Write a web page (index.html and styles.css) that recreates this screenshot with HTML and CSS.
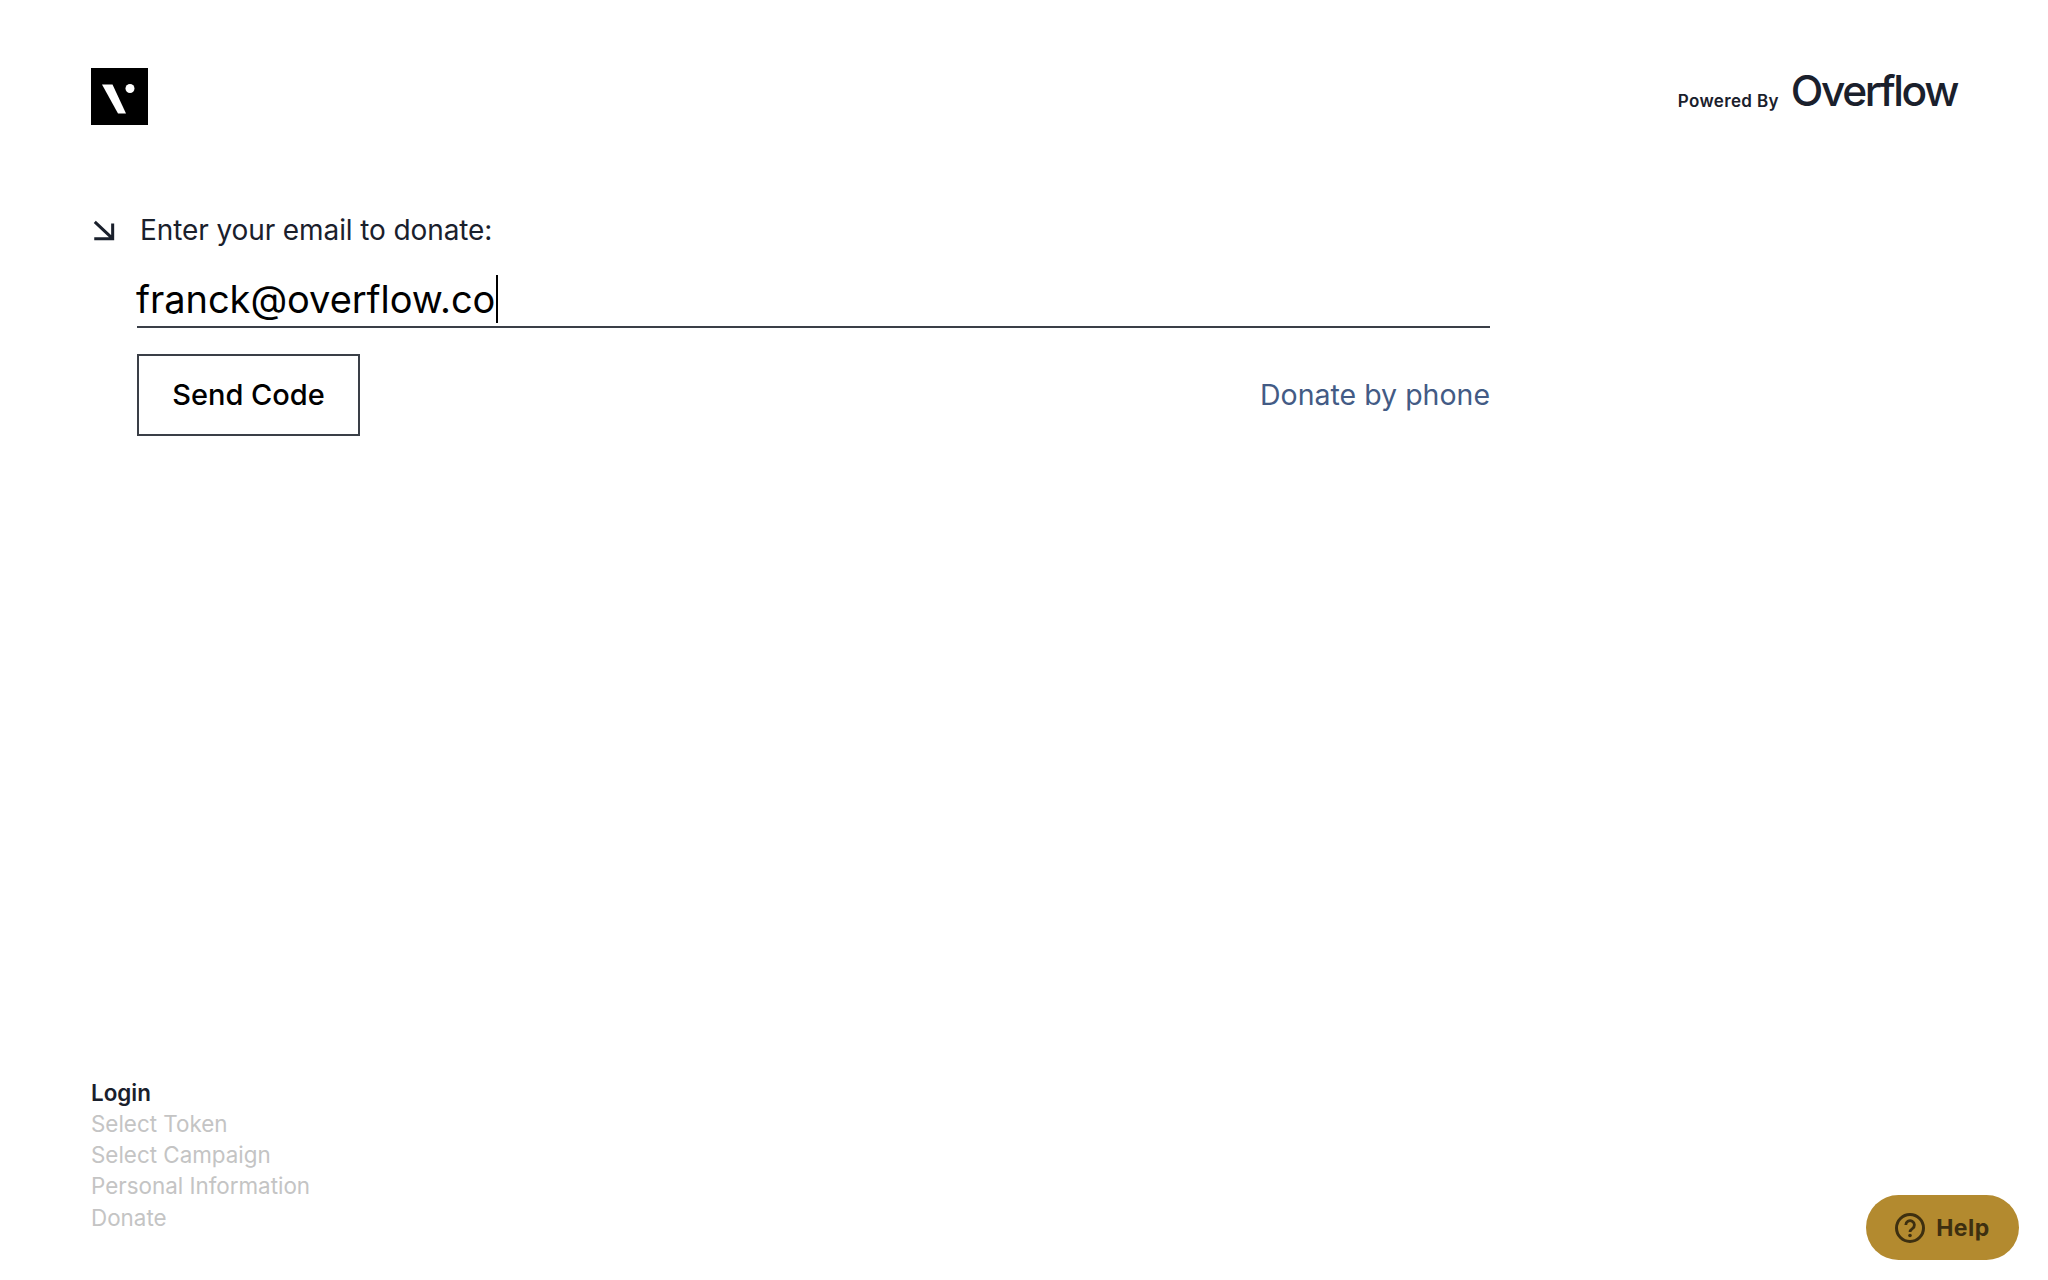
FILE: index.html
```html
<!DOCTYPE html>
<html lang="en">
<head>
    <meta charset="UTF-8">
    <meta name="viewport" content="width=device-width, initial-scale=1.0">
    <link rel="stylesheet" href="styles.css">
    <title>Donate</title>
</head>
<body>

    <div class="page">
        <div class="header">
            <svg class="logo" viewBox="0 0 57 57" aria-label="Logo">
                <rect width="57" height="57" fill="#000"/>
                <path d="M11 16.500H21.500L35 45.500H27Z" fill="#fff"/>
                <circle cx="39" cy="20.500" r="4.500" fill="#fff"/>
            </svg>
            <div class="powered">
                <span class="powered-label">Powered By</span>
                <span class="powered-name">Overflow</span>
            </div>
        </div>

        <form class="email-form">
            <div class="form-label">
                <svg class="arrow" viewBox="0 0 24 24">
                    <path d="M3.500 4.500L19 19M20 6V20H3" fill="none" stroke="#1a202c" stroke-width="2.800"/>
                </svg>
                <label for="email">Enter your email to donate:</label>
            </div>
            <div class="email-field">
                <span id="email" class="email-value">franck@overflow.co</span><span class="caret"></span>
            </div>
            <div class="form-actions">
                <button type="button" class="send-button">Send Code</button>
                <a href="#" class="phone-link">Donate by phone</a>
            </div>
        </form>

        <div class="steps">
            <div class="step active">Login</div>
            <div class="step">Select Token</div>
            <div class="step">Select Campaign</div>
            <div class="step">Personal Information</div>
            <div class="step">Donate</div>
        </div>
    </div>

    <button type="button" class="help-button">
        <svg class="help-icon" viewBox="0 0 30 30">
            <circle cx="15" cy="15" r="13.500" fill="none" stroke="#3d2f10" stroke-width="3"/>
            <path d="M10.800 12a4.300 4.300 0 1 1 6.600 3.600c-1.500 1-2.400 1.700-2.400 3.400" fill="none" stroke="#3d2f10" stroke-width="2.800"/>
            <circle cx="15" cy="22.500" r="1.800" fill="#3d2f10"/>
        </svg>
        Help
    </button>

</body>
</html>
```

FILE: styles.css
```css
body {
    margin: 0;
    font-family: Inter, "Noto Sans", sans-serif;
    background-color: #fff;
    color: #1a202c;
}

.page {
    display: flex;
    flex-direction: column;
    box-sizing: border-box;
    height: 1280px;
    padding: 68px 91px 47px 91px;
}

.header {
    display: flex;
    justify-content: space-between;
    align-items: flex-start;
}

.logo {
    display: block;
    width: 57px;
    height: 57px;
}

.powered {
    display: flex;
    align-items: flex-end;
    gap: 12px;
    margin-top: -3px;
}

.powered-label {
    margin-bottom: 5px;
    font-size: 17px;
    font-weight: 600;
    letter-spacing: 0.350px;
}

.powered-name {
    font-size: 42.500px;
    font-weight: 500;
    letter-spacing: -2.400px;
}

.email-form {
    width: 1399px;
    margin-top: 89px;
}

.form-label {
    display: flex;
    align-items: center;
    gap: 23px;
    height: 32px;
    font-size: 28px;
    letter-spacing: -0.100px;
}

.arrow {
    width: 26px;
    height: 26px;
}

.email-field {
    display: flex;
    align-items: center;
    height: 54px;
    margin: 26px 0 0 46px;
    border-bottom: 2px solid #3a3f47;
    font-size: 38px;
    letter-spacing: -0.050px;
    color: #000;
}

.email-value {
    margin-left: -1px;
}

.caret {
    width: 2px;
    height: 48px;
    margin-left: 1px;
    background-color: #000;
}

.form-actions {
    display: flex;
    justify-content: space-between;
    align-items: center;
    margin: 26px 0 0 46px;
}

.send-button {
    width: 223px;
    height: 82px;
    padding: 0 0 2px;
    border: 2px solid #3a3f47;
    background-color: #fff;
    color: #000;
    font-family: inherit;
    font-size: 29px;
    font-weight: 500;
}

.phone-link {
    margin-bottom: 2px;
    font-size: 28.500px;
    color: #435b85;
    text-decoration: none;
}

.steps {
    margin-top: auto;
    font-size: 22.400px;
    line-height: 31.300px;
    color: #c4c4c4;
}

.step.active {
    font-weight: 600;
    color: #1a202c;
}

.help-button {
    position: fixed;
    right: 29px;
    bottom: 20px;
    display: flex;
    justify-content: center;
    align-items: center;
    gap: 11px;
    width: 153px;
    height: 65px;
    border: none;
    border-radius: 33px;
    background-color: #b38a2f;
    color: #3d2f10;
    font-family: inherit;
    font-size: 23px;
    font-weight: 700;
    letter-spacing: 0.500px;
}

.help-icon {
    width: 30px;
    height: 30px;
}
```
